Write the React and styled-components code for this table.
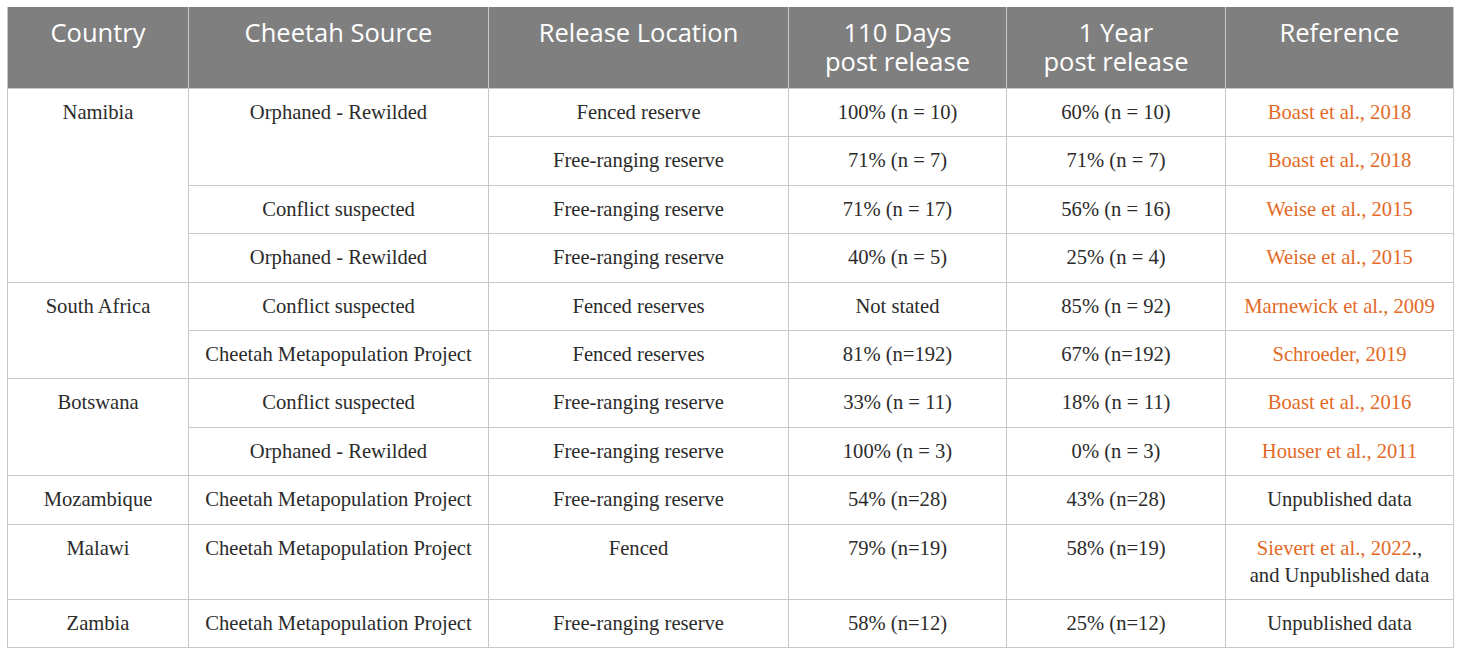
import React from "react";
import styled, { createGlobalStyle } from "styled-components";

const GlobalStyle = createGlobalStyle`
  html, body {
    margin: 0;
    padding: 0;
    background: #ffffff;
  }
  body {
    padding: 7px 0 0 7px;
  }
`;

const Table = styled.table`
  border-collapse: collapse;
  table-layout: fixed;
  width: 1446px;
  font-family: "Liberation Serif", "Times New Roman", serif;
  color: #2b2b2b;
`;

const HeadCell = styled.th`
  background: #7f7f7f;
  color: #ffffff;
  font-family: "Open Sans", "Noto Sans", sans-serif;
  font-weight: 400;
  font-size: 25.5px;
  line-height: 29px;
  height: 81px;
  box-sizing: border-box;
  padding: 11px 4px 12px;
  vertical-align: top;
  text-align: center;
  border-left: 1px solid #c8c8c8;
  border-right: 1px solid #c8c8c8;
`;

const Cell = styled.td`
  border: 1px solid #c8c8c8;
  font-size: 20.6px;
  line-height: 27px;
  padding: 10px 4px 10.4px;
  vertical-align: top;
  text-align: center;
  white-space: nowrap;
`;

const Ref = styled.span`
  color: ${(p) => (p.$link ? "#e36a26" : "#2b2b2b")};
`;

const columns = [
  { label: "Country", width: 181 },
  { label: "Cheetah Source", width: 300 },
  { label: "Release Location", width: 300 },
  { label: ["110 Days", "post release"], width: 218 },
  { label: ["1 Year", "post release"], width: 219 },
  { label: "Reference", width: 228 },
];

const Row = styled.tr``;

export default function App() {
  return (
    <>
      <GlobalStyle />
      <Table>
        <colgroup>
          {columns.map((c, i) => (
            <col key={i} style={{ width: c.width }} />
          ))}
        </colgroup>
        <thead>
          <tr>
            {columns.map((c, i) => (
              <HeadCell key={i}>
                {Array.isArray(c.label) ? (
                  <>
                    {c.label[0]}
                    <br />
                    {c.label[1]}
                  </>
                ) : (
                  c.label
                )}
              </HeadCell>
            ))}
          </tr>
        </thead>
        <tbody>
          <Row>
            <Cell rowSpan={4}>Namibia</Cell>
            <Cell rowSpan={2}>Orphaned - Rewilded</Cell>
            <Cell>Fenced reserve</Cell>
            <Cell>100% (n = 10)</Cell>
            <Cell>60% (n = 10)</Cell>
            <Cell><Ref $link>Boast et al., 2018</Ref></Cell>
          </Row>
          <Row>
            <Cell>Free-ranging reserve</Cell>
            <Cell>71% (n = 7)</Cell>
            <Cell>71% (n = 7)</Cell>
            <Cell><Ref $link>Boast et al., 2018</Ref></Cell>
          </Row>
          <Row>
            <Cell>Conflict suspected</Cell>
            <Cell>Free-ranging reserve</Cell>
            <Cell>71% (n = 17)</Cell>
            <Cell>56% (n = 16)</Cell>
            <Cell><Ref $link>Weise et al., 2015</Ref></Cell>
          </Row>
          <Row>
            <Cell>Orphaned - Rewilded</Cell>
            <Cell>Free-ranging reserve</Cell>
            <Cell>40% (n = 5)</Cell>
            <Cell>25% (n = 4)</Cell>
            <Cell><Ref $link>Weise et al., 2015</Ref></Cell>
          </Row>
          <Row>
            <Cell rowSpan={2}>South Africa</Cell>
            <Cell>Conflict suspected</Cell>
            <Cell>Fenced reserves</Cell>
            <Cell>Not stated</Cell>
            <Cell>85% (n = 92)</Cell>
            <Cell><Ref $link>Marnewick et al., 2009</Ref></Cell>
          </Row>
          <Row>
            <Cell>Cheetah Metapopulation Project</Cell>
            <Cell>Fenced reserves</Cell>
            <Cell>81% (n=192)</Cell>
            <Cell>67% (n=192)</Cell>
            <Cell><Ref $link>Schroeder, 2019</Ref></Cell>
          </Row>
          <Row>
            <Cell rowSpan={2}>Botswana</Cell>
            <Cell>Conflict suspected</Cell>
            <Cell>Free-ranging reserve</Cell>
            <Cell>33% (n = 11)</Cell>
            <Cell>18% (n = 11)</Cell>
            <Cell><Ref $link>Boast et al., 2016</Ref></Cell>
          </Row>
          <Row>
            <Cell>Orphaned - Rewilded</Cell>
            <Cell>Free-ranging reserve</Cell>
            <Cell>100% (n = 3)</Cell>
            <Cell>0% (n = 3)</Cell>
            <Cell><Ref $link>Houser et al., 2011</Ref></Cell>
          </Row>
          <Row>
            <Cell>Mozambique</Cell>
            <Cell>Cheetah Metapopulation Project</Cell>
            <Cell>Free-ranging reserve</Cell>
            <Cell>54% (n=28)</Cell>
            <Cell>43% (n=28)</Cell>
            <Cell>Unpublished data</Cell>
          </Row>
          <Row>
            <Cell>Malawi</Cell>
            <Cell>Cheetah Metapopulation Project</Cell>
            <Cell>Fenced</Cell>
            <Cell>79% (n=19)</Cell>
            <Cell>58% (n=19)</Cell>
            <Cell>
              <Ref $link>Sievert et al., 2022</Ref>.,
              <br />
              and Unpublished data
            </Cell>
          </Row>
          <Row>
            <Cell>Zambia</Cell>
            <Cell>Cheetah Metapopulation Project</Cell>
            <Cell>Free-ranging reserve</Cell>
            <Cell>58% (n=12)</Cell>
            <Cell>25% (n=12)</Cell>
            <Cell>Unpublished data</Cell>
          </Row>
        </tbody>
      </Table>
    </>
  );
}
